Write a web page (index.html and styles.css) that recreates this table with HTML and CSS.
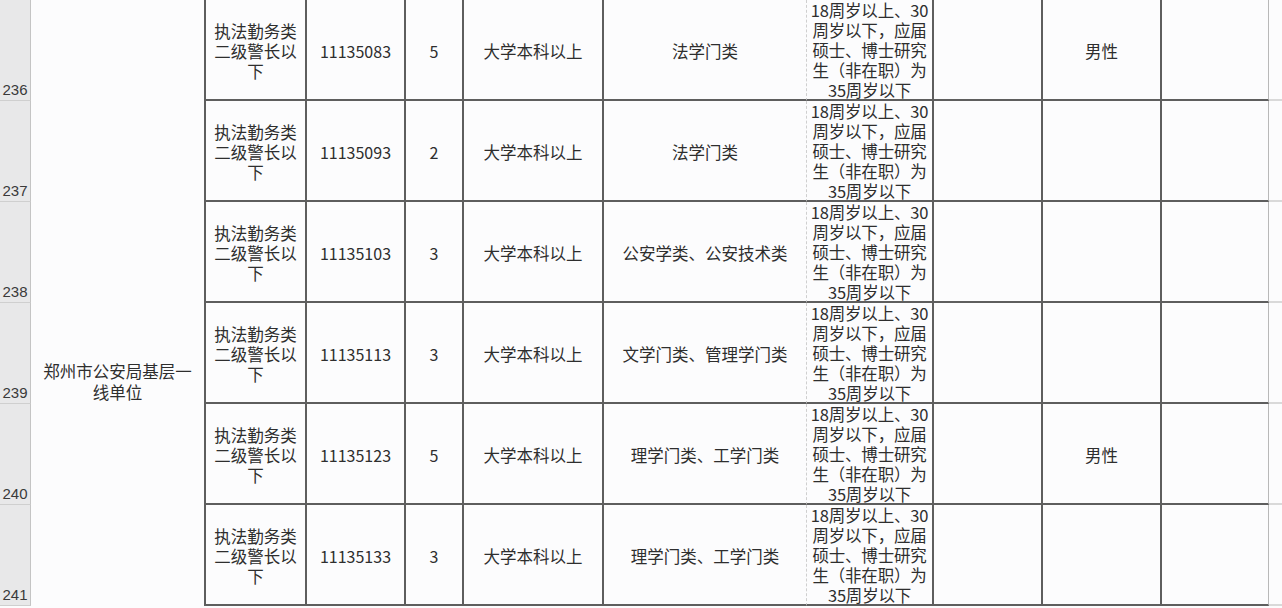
FILE: index.html
```html
<!DOCTYPE html>
<html lang="zh-CN">
<head>
<meta charset="utf-8">
<title>职位表</title>
<link rel="stylesheet" href="styles.css">
</head>
<body>
<div class="sheet">
  <div class="rh r1">236</div>
  <div class="rh r2">237</div>
  <div class="rh r3">238</div>
  <div class="rh r4">239</div>
  <div class="rh r5">240</div>
  <div class="rh r6">241</div>

  <div class="unit"><span>郑州市公安局基层一<br>线单位</span></div>

  <!-- row 236 -->
  <div class="c cb">执法勤务类<br>二级警长以<br>下</div>
  <div class="c cc">11135083</div>
  <div class="c cd">5</div>
  <div class="c ce">大学本科以上</div>
  <div class="c cf">法学门类</div>
  <div class="c cg">18周岁以上、30<br>周岁以下，应届<br>硕士、博士研究<br>生（非在职）为<br>35周岁以下</div>
  <div class="c ch"></div>
  <div class="c ci">男性</div>
  <div class="c cj"></div>
  <div class="c ck"></div>

  <!-- row 237 -->
  <div class="c cb">执法勤务类<br>二级警长以<br>下</div>
  <div class="c cc">11135093</div>
  <div class="c cd">2</div>
  <div class="c ce">大学本科以上</div>
  <div class="c cf">法学门类</div>
  <div class="c cg">18周岁以上、30<br>周岁以下，应届<br>硕士、博士研究<br>生（非在职）为<br>35周岁以下</div>
  <div class="c ch"></div>
  <div class="c ci"></div>
  <div class="c cj"></div>
  <div class="c ck"></div>

  <!-- row 238 -->
  <div class="c cb">执法勤务类<br>二级警长以<br>下</div>
  <div class="c cc">11135103</div>
  <div class="c cd">3</div>
  <div class="c ce">大学本科以上</div>
  <div class="c cf">公安学类、公安技术类</div>
  <div class="c cg">18周岁以上、30<br>周岁以下，应届<br>硕士、博士研究<br>生（非在职）为<br>35周岁以下</div>
  <div class="c ch"></div>
  <div class="c ci"></div>
  <div class="c cj"></div>
  <div class="c ck"></div>

  <!-- row 239 -->
  <div class="c cb">执法勤务类<br>二级警长以<br>下</div>
  <div class="c cc">11135113</div>
  <div class="c cd">3</div>
  <div class="c ce">大学本科以上</div>
  <div class="c cf">文学门类、管理学门类</div>
  <div class="c cg">18周岁以上、30<br>周岁以下，应届<br>硕士、博士研究<br>生（非在职）为<br>35周岁以下</div>
  <div class="c ch"></div>
  <div class="c ci"></div>
  <div class="c cj"></div>
  <div class="c ck"></div>

  <!-- row 240 -->
  <div class="c cb">执法勤务类<br>二级警长以<br>下</div>
  <div class="c cc">11135123</div>
  <div class="c cd">5</div>
  <div class="c ce">大学本科以上</div>
  <div class="c cf">理学门类、工学门类</div>
  <div class="c cg">18周岁以上、30<br>周岁以下，应届<br>硕士、博士研究<br>生（非在职）为<br>35周岁以下</div>
  <div class="c ch"></div>
  <div class="c ci">男性</div>
  <div class="c cj"></div>
  <div class="c ck"></div>

  <!-- row 241 -->
  <div class="c cb">执法勤务类<br>二级警长以<br>下</div>
  <div class="c cc">11135133</div>
  <div class="c cd">3</div>
  <div class="c ce">大学本科以上</div>
  <div class="c cf">理学门类、工学门类</div>
  <div class="c cg">18周岁以上、30<br>周岁以下，应届<br>硕士、博士研究<br>生（非在职）为<br>35周岁以下</div>
  <div class="c ch"></div>
  <div class="c ci"></div>
  <div class="c cj"></div>
  <div class="c ck"></div>
</div>
</body>
</html>
```

FILE: styles.css
```css
html, body {
  margin: 0;
  padding: 0;
  background: #fcfcfd;
  overflow: hidden;
}

.sheet {
  display: grid;
  grid-template-columns: 31px 175px 101px 99px 58px 140px 203px 127px 109px 119px 107px 1fr;
  grid-template-rows: repeat(6, 101px);
  width: 1282px;
  font-family: "Noto Sans CJK SC", "Noto Sans", sans-serif;
  font-size: 16.5px;
  color: #2e2e2e;
}

.rh {
  grid-column: 1;
  background: #e8e8e9;
  border-right: 1px solid #c4c4c4;
  border-bottom: 1px solid #cfcfcf;
  box-sizing: border-box;
  display: flex;
  align-items: flex-end;
  justify-content: center;
  padding-bottom: 2px;
  font-family: "Liberation Sans", sans-serif;
  font-size: 15px;
  color: #3a3a3a;
}
.r1 { grid-row: 1; }
.r2 { grid-row: 2; }
.r3 { grid-row: 3; }
.r4 { grid-row: 4; }
.r5 { grid-row: 5; }
.r6 { grid-row: 6; }

.unit {
  grid-column: 2;
  grid-row: 1 / span 6;
  border-right: 2px solid #5e5e5e;
  box-sizing: border-box;
  display: flex;
  justify-content: center;
  align-items: flex-start;
  padding-top: 361px;
  text-align: center;
  line-height: 21px;
}

.c {
  box-sizing: border-box;
  border-right: 2px solid #5e5e5e;
  border-bottom: 2px solid #5e5e5e;
  display: flex;
  align-items: center;
  justify-content: center;
  text-align: center;
  line-height: 20px;
  padding-top: 3px;
  white-space: nowrap;
}

.cc, .cd {
  font-size: 16px;
}

.cf {
  border-right: 1px dashed #cfcfcf;
}

.cg {
  line-height: 20px;
  padding-top: 0;
  letter-spacing: -0.2px;
}

.cj {
  border-right: 1px solid #b8b8b8;
}

.ck {
  border-right: none;
  border-bottom: 2px solid #d9d9d9;
}
```
